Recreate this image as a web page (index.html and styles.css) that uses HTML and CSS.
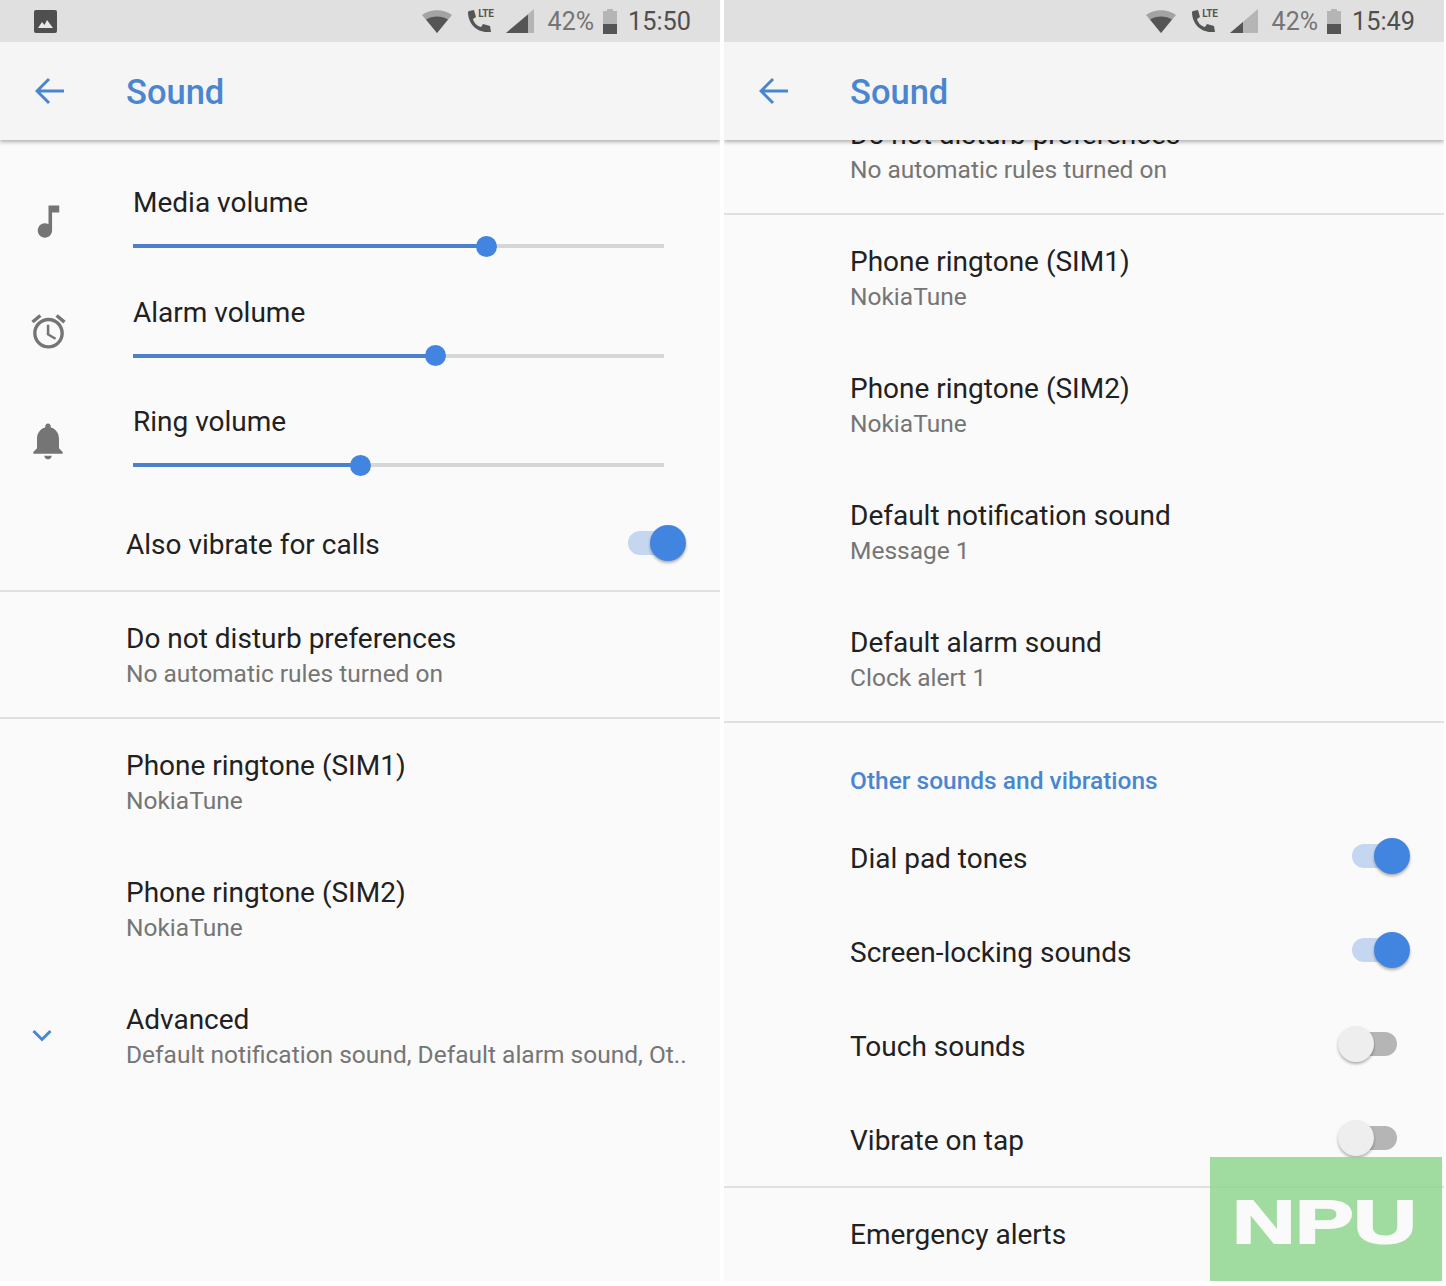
FILE: index.html
```html
<!DOCTYPE html>
<html lang="en">
<head>
  <meta charset="UTF-8">
  <title>Sound settings</title>
  <link rel="stylesheet" href="styles.css">
</head>
<body>
  <div class="phones">

    <!-- left screen -->
    <div class="phone">
      <div class="statusbar">
        <svg class="status-image" width="23" height="23" viewBox="0 0 23 23"><rect width="23" height="23" rx="2" fill="#4f4f4f"/><path d="M4 18l4-6 2.5 3 2.5-5 6 8z" fill="#e8e8e8"/></svg>
        <div class="status-right">
          <svg width="30" height="23" viewBox="0 0 30 23"><path d="M0 5C8-1.500 22-1.500 30 5L15 23z" fill="#a3a3a3"/><path d="M4 9.500C10 5.500 20 5.500 26 9.500L15 23z" fill="#555"/></svg>
          <div class="status-call">
            <svg width="25" height="25" viewBox="0 0 25 25"><path d="M2 2l5-1 2 7-3 2c1 4 4 7 8 8l2-3 7 2 1 6h-4C9 23 1 14 1 3z" fill="#555"/></svg>
            <span class="lte">LTE</span>
          </div>
          <svg width="28" height="24" viewBox="0 0 28 24"><path d="M28 0v24H0z" fill="#b5b5b5"/><path d="M22 5.500V24H0z" fill="#555"/></svg>
          <span class="status-pct">42%</span>
          <svg width="14" height="25" viewBox="0 0 14 25"><path d="M4 0h6v2h4v23H0V2h4z" fill="#b5b5b5"/><path d="M0 15h14v10H0z" fill="#555"/></svg>
          <span class="status-time">15:50</span>
        </div>
      </div>
      <div class="toolbar">
        <svg class="back" width="30" height="28" viewBox="0 0 30 28"><path d="M29 14H3M14 2L2 14l12 12" fill="none" stroke="#4a86d0" stroke-width="3"/></svg>
        <div class="toolbar-title">Sound</div>
      </div>

      <div class="volumes">
        <div class="sliders">
          <div class="slider-row">
            <div class="slider-icon">
              <svg width="43" height="43" viewBox="0 0 24 24"><path d="M12 3v10.550c-.59-.34-1.270-.55-2-.55-2.210 0-4 1.790-4 4s1.790 4 4 4 4-1.790 4-4V7h4V3h-6z" fill="#757575"/></svg>
            </div>
            <div class="slider-body">
              <div class="title">Media volume</div>
              <div class="track"><div class="fill" style="width:66.6%"><span class="thumb"></span></div></div>
            </div>
          </div>
          <div class="slider-row">
            <div class="slider-icon">
              <svg width="41" height="41" viewBox="0 0 24 24"><path d="M22 5.720l-4.600-3.860-1.290 1.530 4.600 3.860L22 5.720zM7.880 3.390L6.600 1.860 2 5.710l1.290 1.530 4.590-3.850zM12.500 8H11v6l4.750 2.850.75-1.230-4-2.370V8zM12 4c-4.970 0-9 4.030-9 9s4.030 9 9 9c4.970 0 9-4.030 9-9s-4.030-9-9-9zm0 16c-3.870 0-7-3.130-7-7s3.130-7 7-7 7 3.130 7 7-3.130 7-7 7z" fill="#757575"/></svg>
            </div>
            <div class="slider-body">
              <div class="title">Alarm volume</div>
              <div class="track"><div class="fill" style="width:57%"><span class="thumb"></span></div></div>
            </div>
          </div>
          <div class="slider-row">
            <div class="slider-icon">
              <svg width="44" height="44" viewBox="0 0 24 24"><path d="M12 22c1.100 0 2-.9 2-2h-4c0 1.100.89 2 2 2zm6-6v-5c0-3.070-1.640-5.640-4.500-6.320V4c0-.83-.67-1.500-1.500-1.500s-1.500.67-1.500 1.500v.68C7.630 5.360 6 7.920 6 11v5l-2 2v1h16v-1l-2-2z" fill="#757575"/></svg>
            </div>
            <div class="slider-body">
              <div class="title">Ring volume</div>
              <div class="track"><div class="fill" style="width:42.9%"><span class="thumb"></span></div></div>
            </div>
          </div>
        </div>
        <div class="toggle-row">
          <div class="title">Also vibrate for calls</div>
          <div class="switch on"><span class="switch-track"></span><span class="switch-thumb"></span></div>
        </div>
      </div>

      <div class="row divided">
        <div class="title">Do not disturb preferences</div>
        <div class="sub">No automatic rules turned on</div>
      </div>
      <div class="row">
        <div class="title">Phone ringtone (SIM1)</div>
        <div class="sub">NokiaTune</div>
      </div>
      <div class="row">
        <div class="title">Phone ringtone (SIM2)</div>
        <div class="sub">NokiaTune</div>
      </div>
      <div class="row advanced">
        <svg class="chevron" width="20" height="13" viewBox="0 0 20 13"><path d="M1.500 2L10 10.500 18.500 2" fill="none" stroke="#4a86d0" stroke-width="3"/></svg>
        <div class="title">Advanced</div>
        <div class="sub">Default notification sound, Default alarm sound, Ot..</div>
      </div>
    </div>

    <!-- right screen, scrolled down -->
    <div class="phone">
      <div class="statusbar">
        <div class="status-right">
          <svg width="30" height="23" viewBox="0 0 30 23"><path d="M0 5C8-1.500 22-1.500 30 5L15 23z" fill="#a3a3a3"/><path d="M4 9.500C10 5.500 20 5.500 26 9.500L15 23z" fill="#555"/></svg>
          <div class="status-call">
            <svg width="25" height="25" viewBox="0 0 25 25"><path d="M2 2l5-1 2 7-3 2c1 4 4 7 8 8l2-3 7 2 1 6h-4C9 23 1 14 1 3z" fill="#555"/></svg>
            <span class="lte">LTE</span>
          </div>
          <svg width="28" height="24" viewBox="0 0 28 24"><path d="M28 0v24H0z" fill="#b5b5b5"/><path d="M13 13v11H0z" fill="#555"/></svg>
          <span class="status-pct">42%</span>
          <svg width="14" height="25" viewBox="0 0 14 25"><path d="M4 0h6v2h4v23H0V2h4z" fill="#b5b5b5"/><path d="M0 15h14v10H0z" fill="#555"/></svg>
          <span class="status-time">15:49</span>
        </div>
      </div>
      <div class="toolbar">
        <svg class="back" width="30" height="28" viewBox="0 0 30 28"><path d="M29 14H3M14 2L2 14l12 12" fill="none" stroke="#4a86d0" stroke-width="3"/></svg>
        <div class="toolbar-title">Sound</div>
      </div>

      <div class="scrolled">
        <div class="row divided">
          <div class="title">Do not disturb preferences</div>
          <div class="sub">No automatic rules turned on</div>
        </div>
        <div class="row">
          <div class="title">Phone ringtone (SIM1)</div>
          <div class="sub">NokiaTune</div>
        </div>
        <div class="row">
          <div class="title">Phone ringtone (SIM2)</div>
          <div class="sub">NokiaTune</div>
        </div>
        <div class="row">
          <div class="title">Default notification sound</div>
          <div class="sub">Message 1</div>
        </div>
        <div class="row divided">
          <div class="title">Default alarm sound</div>
          <div class="sub">Clock alert 1</div>
        </div>

        <div class="section-head">Other sounds and vibrations</div>
        <div class="toggle-group">
          <div class="toggle-row">
            <div class="title">Dial pad tones</div>
            <div class="switch on"><span class="switch-track"></span><span class="switch-thumb"></span></div>
          </div>
          <div class="toggle-row">
            <div class="title">Screen-locking sounds</div>
            <div class="switch on"><span class="switch-track"></span><span class="switch-thumb"></span></div>
          </div>
          <div class="toggle-row">
            <div class="title">Touch sounds</div>
            <div class="switch"><span class="switch-track"></span><span class="switch-thumb"></span></div>
          </div>
          <div class="toggle-row">
            <div class="title">Vibrate on tap</div>
            <div class="switch"><span class="switch-track"></span><span class="switch-thumb"></span></div>
          </div>
        </div>
        <div class="row">
          <div class="title">Emergency alerts</div>
        </div>
      </div>

      <div class="watermark"><span class="watermark-text">NPU</span></div>
    </div>

  </div>
</body>
</html>
```

FILE: styles.css
```css
* {
  box-sizing: border-box;
}
body {
  margin: 0;
  background: #fff;
  font-family: "Roboto", "Liberation Sans", sans-serif;
  color: #212121;
}
.phones {
  display: flex;
  gap: 4px;
}
.phone {
  position: relative;
  width: 720px;
  height: 1281px;
  overflow: hidden;
  background: #fafafa;
}

/* status bar */
.statusbar {
  position: relative;
  z-index: 3;
  height: 42px;
  background: #e0e0e0;
  display: flex;
  align-items: center;
  padding: 0 29px 0 34px;
}
.status-image {
  margin-top: 1px;
}
.status-right {
  margin-left: auto;
  display: flex;
  align-items: center;
  gap: 13px;
}
.status-call {
  position: relative;
  width: 25px;
  height: 25px;
  margin: 0 1px 0 2px;
}
.status-call svg {
  display: block;
}
.lte {
  position: absolute;
  top: -1px;
  right: -2px;
  font-size: 10px;
  line-height: 12px;
  font-weight: 700;
  color: #555;
  letter-spacing: -0.3px;
}
.status-pct {
  font-size: 25px;
  color: #757575;
  margin: 1px -4px 0 1px;
}
.status-time {
  font-size: 25.300px;
  color: #4f4f4f;
  margin: 1px 0 0 -2px;
}

/* toolbar */
.toolbar {
  position: relative;
  z-index: 2;
  height: 98px;
  background: #f5f5f5;
  box-shadow: 0 2px 4px rgba(0, 0, 0, 0.3);
  display: flex;
  align-items: center;
}
.back {
  margin-left: 35px;
  margin-top: -1px;
}
.toolbar-title {
  margin-left: 61px;
  margin-top: 1px;
  font-size: 34.500px;
  font-weight: 500;
  color: #4a86d0;
}

/* text rows */
.title {
  font-size: 28px;
  line-height: 36px;
  color: #212121;
}
.sub {
  font-size: 24.500px;
  line-height: 34px;
  color: #757575;
}
.row {
  position: relative;
  height: 127px;
  padding: 29px 34px 0 126px;
  white-space: nowrap;
}
.divided {
  border-bottom: 2px solid #e0e0e0;
}
.chevron {
  position: absolute;
  left: 32px;
  top: 56px;
}
.scrolled {
  margin-top: -52px;
}

/* volume sliders */
.volumes {
  padding-top: 26px;
  border-bottom: 2px solid #e0e0e0;
}
.sliders {
  padding-bottom: 1.5px;
}
.slider-row {
  height: 109.500px;
  display: flex;
  align-items: center;
}
.slider-icon {
  width: 96px;
  margin: 2px 37px 0 0;
  display: flex;
  justify-content: center;
}
.slider-icon svg {
  display: block;
}
.slider-body {
  width: 531px;
  height: 109.500px;
  padding-top: 19px;
}
.track {
  position: relative;
  margin-top: 23px;
  height: 4px;
  background: #d6d6d6;
}
.fill {
  position: relative;
  height: 100%;
  background: #4a80cc;
}
.thumb {
  position: absolute;
  right: -10.500px;
  top: -8.500px;
  width: 21px;
  height: 21px;
  border-radius: 50%;
  background: #4285e0;
}

/* toggles */
.toggle-row {
  height: 94px;
  display: flex;
  align-items: center;
  justify-content: space-between;
  padding: 0 34px 0 126px;
}
.toggle-row .title {
  margin-top: 2px;
}
.toggle-row .switch {
  margin-top: -4px;
}
.volumes .toggle-row .title {
  margin-top: 4px;
}
.volumes .toggle-row .switch {
  margin-top: 0;
}
.toggle-group {
  border-bottom: 2px solid #e0e0e0;
  height: 377px;
}
.section-head {
  height: 88px;
  padding: 40px 0 0 126px;
  font-size: 24.500px;
  line-height: 36px;
  font-weight: 500;
  color: #4a86d0;
}
.switch {
  position: relative;
  width: 72px;
  height: 36px;
  flex: none;
}
.switch-track {
  position: absolute;
  left: 14px;
  top: 6px;
  width: 45px;
  height: 24px;
  border-radius: 12px;
  background: #b5b5b5;
}
.switch-thumb {
  position: absolute;
  left: 0;
  top: 0;
  width: 36px;
  height: 36px;
  border-radius: 50%;
  background: #eeeeee;
  box-shadow: 0 2px 3px rgba(0, 0, 0, 0.3);
}
.switch.on .switch-track {
  background: #c5d6f0;
}
.switch.on .switch-thumb {
  left: 36px;
  background: #4285e0;
}

/* watermark */
.watermark {
  position: absolute;
  left: 486px;
  top: 1157px;
  width: 232px;
  height: 124px;
  background: rgba(140, 212, 140, 0.82);
  display: flex;
  align-items: center;
  justify-content: center;
}
.watermark-text {
  position: relative;
  top: 2px;
  left: -1.500px;
  font-family: "Liberation Sans", sans-serif;
  font-size: 62px;
  font-weight: 700;
  color: #fafafa;
  -webkit-text-stroke: 2px #fafafa;
  transform: scaleX(1.41);
}
```
